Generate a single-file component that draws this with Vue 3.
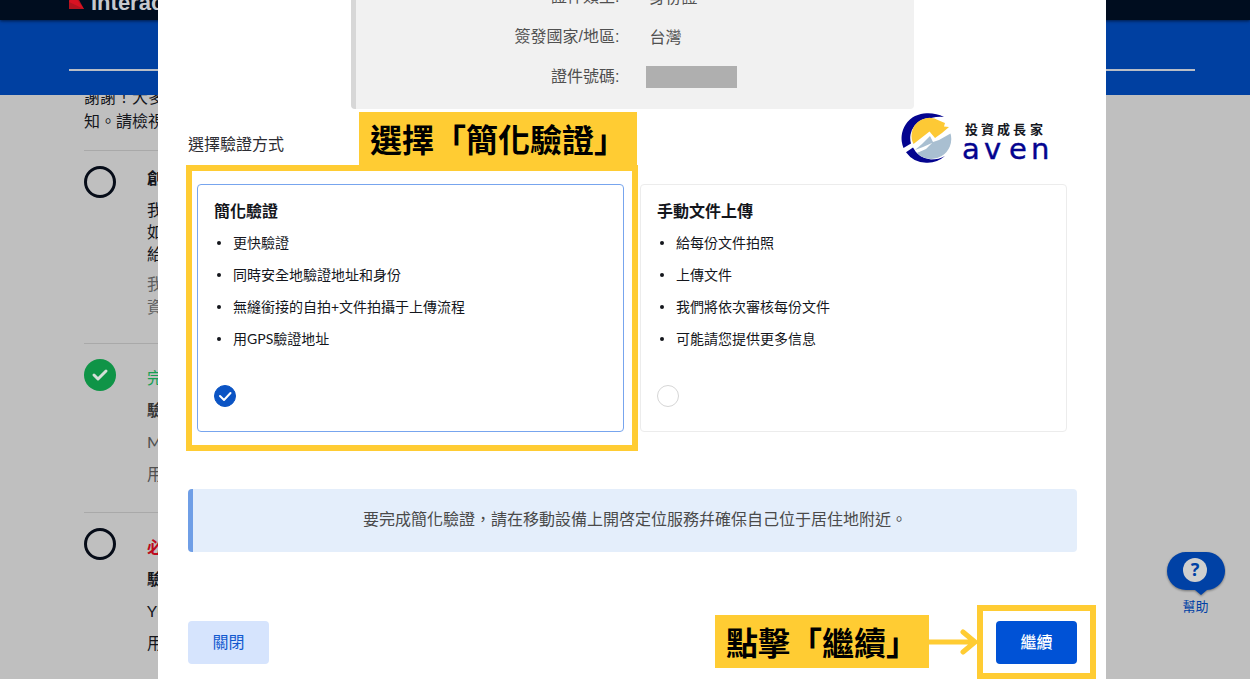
<script setup>
import { ref } from 'vue'

const summary = [
  { label: '證件類型:', value: '身份證' },
  { label: '簽發國家/地區:', value: '台灣' },
  { label: '證件號碼:', value: '' },
]

const methods = [
  {
    id: 'simple',
    title: '簡化驗證',
    points: ['更快驗證', '同時安全地驗證地址和身份', '無縫銜接的自拍+文件拍攝于上傳流程', '用GPS驗證地址'],
  },
  {
    id: 'manual',
    title: '手動文件上傳',
    points: ['給每份文件拍照', '上傳文件', '我們將依次審核每份文件', '可能請您提供更多信息'],
  },
]

const selected = ref('simple')
</script>

<template>
  <div class="page">
    <header class="topbar">
      <svg class="brand-mark" width="15" height="20" viewBox="0 0 15 20" aria-hidden="true">
        <path d="M0 0H4L15 20H0Z" fill="#b3131f" />
        <path d="M4 5L15 20L0 13Z" fill="#d81222" />
      </svg>
      <span class="brand-name">Interactive</span>
    </header>
    <div class="banner"><div class="banner-line"></div></div>

    <main class="tasks">
      <p class="intro">謝謝！大多<br />知。請檢視</p>
      <section class="task first">
        <span class="ring"></span>
        <div class="task-text">
          <h2>創</h2>
          <p class="body">我<br />如<br />給</p>
          <p class="hint">我<br />資</p>
        </div>
      </section>
      <section class="task">
        <svg class="done" width="32" height="32" viewBox="0 0 32 32" aria-hidden="true">
          <circle cx="16" cy="16" r="16" fill="#0f9447" />
          <path d="M10 16L14 20L22 12" fill="none" stroke="#d5dfd8" stroke-width="3" stroke-linecap="round" stroke-linejoin="round" />
        </svg>
        <div class="task-text muted">
          <p class="ok">完</p>
          <h2>驗</h2>
          <p>M</p>
          <p>用</p>
        </div>
      </section>
      <section class="task">
        <span class="ring"></span>
        <div class="task-text">
          <p class="required">必</p>
          <h2>驗</h2>
          <p>YU</p>
          <p>用</p>
        </div>
      </section>
    </main>

    <button class="help" type="button">
      <svg width="61" height="48" viewBox="0 0 61 48" aria-hidden="true">
        <path class="bubble" d="M21 2H40A19 19 0 0 1 42 40L36 45L30 40H21A19 19 0 0 1 21 2Z" fill="#0041a5" />
        <circle cx="30" cy="20" r="12" fill="#cfcfcf" />
        <text x="30" y="26" text-anchor="middle" class="question">?</text>
      </svg>
      <span>幫助</span>
    </button>

    <div class="overlay">
      <div class="modal" role="dialog" aria-label="選擇驗證方式">
        <dl class="summary">
          <div v-for="row in summary" :key="row.label" class="summary-row">
            <dt>{{ row.label }}</dt>
            <dd v-if="row.value">{{ row.value }}</dd>
            <dd v-else class="redacted"></dd>
          </div>
        </dl>

        <div class="method-head">
          <h3>選擇驗證方式</h3>
          <svg class="logo" width="149" height="50" viewBox="0 0 149 50" role="img" aria-label="投資成長家 aven">
            <g fill="#04048f">
              <path d="M43 4Q35 0 26 0.300A25 25 0 0 0 2.500 35L10 30.500A20 20 0 0 1 30 5Q38 3 43 4Z" />
              <path d="M5 39.300L12 34.500Q17 45 30 46.500Q38 46.500 44 43Q36 50 26 49.700A25 25 0 0 1 5 39.300Z" />
            </g>
            <path d="M12.500 31A18 18 0 0 1 38 7.500Q42 9 44 10L43 13.500L48 14L41 20L34 25L28.500 18.500Z" fill="#fdc935" />
            <path d="M14 37L21 31L29 23L32 29L38 27L49.500 20.500A20 20 0 0 1 16 40L25 36L31 30L22 34Z" fill="#a9bfd1" />
            <path d="M16 40L26 37L33 30L38 28L49 22A20 20 0 0 1 16 40Z" fill="#a9bfd1" />
            <text class="logo-zh" x="64 80 96 112 129" y="21">投資成長家</text>
            <text class="logo-en" x="61 83 108 130" y="46">aven</text>
          </svg>
        </div>

        <div class="methods">
          <label v-for="m in methods" :key="m.id" class="card" :class="{ active: selected === m.id }">
            <strong>{{ m.title }}</strong>
            <ul>
              <li v-for="p in m.points" :key="p">{{ p }}</li>
            </ul>
            <span class="radio">
              <input v-model="selected" type="radio" name="method" :value="m.id" />
              <svg v-if="selected === m.id" viewBox="0 0 22 22" aria-hidden="true">
                <path d="M6 11L10 15L16.500 8" fill="none" stroke="#fff" stroke-width="2" stroke-linecap="round" stroke-linejoin="round" />
              </svg>
            </span>
            <span v-if="m.id === 'simple'" class="frame card-frame">
              <span class="callout card-callout">選擇「簡化驗證」</span>
            </span>
          </label>
        </div>

        <p class="notice">要完成簡化驗證，請在移動設備上開啓定位服務幷確保自己位于居住地附近。</p>

        <footer class="actions">
          <button class="btn close" type="button">關閉</button>
          <div class="next">
            <button class="btn go" type="button">繼續</button>
            <span class="frame next-frame"></span>
            <div class="pointer">
              <span class="callout">點擊「繼續」</span>
              <svg width="48" height="28" viewBox="0 0 48 28" aria-hidden="true">
                <path d="M0 14H46M34 4L46 14L34 24" fill="none" stroke="#ffcc33" stroke-width="5" stroke-linecap="round" stroke-linejoin="round" />
              </svg>
            </div>
          </div>
        </footer>
      </div>
    </div>
  </div>
</template>

<style>
body {
  margin: 0;
  background: #bfbfbf;
}
</style>

<style scoped>
* {
  box-sizing: border-box;
}
.page {
  position: relative;
  height: 100vh;
  overflow: hidden;
  background: #bfbfbf;
  color: #14161c;
  font: 16px/24px Lato, "Noto Sans CJK TC", sans-serif;
}
h2, h3, p, ul, dl, dd {
  margin: 0;
  padding: 0;
}
h2 {
  font-size: 16px;
  line-height: inherit;
}
button {
  border: 0;
  font: inherit;
  cursor: pointer;
}

.topbar {
  position: relative;
  z-index: 2;
  display: flex;
  align-items: flex-end;
  gap: 7px;
  height: 20px;
  padding: 0 0 11px 69px;
  background: #000d1f;
  box-shadow: 0 1px 3px #001a44;
}
.brand-mark {
  flex: none;
}
.brand-name {
  margin-bottom: -6px;
  color: #c6c9ce;
  font: 700 22px/24px "Liberation Sans", sans-serif;
}
.banner {
  position: relative;
  z-index: 1;
  height: 75px;
  padding: 49px 55px 0 69px;
  background: #0040a1;
}
.banner-line {
  height: 2px;
  background: #b9bdc6;
}

.tasks {
  margin: -10px 150px 0 84px;
}
.intro {
  padding-bottom: 17px;
}
.task {
  display: flex;
  align-items: flex-start;
  gap: 30px;
  padding: 15px 0 22px;
  border-top: 1px solid #a9a9a9;
}
.ring {
  flex: none;
  width: 32px;
  height: 32px;
  border: 3px solid #060c18;
  border-radius: 50%;
}
.done {
  flex: none;
}
.task-text {
  padding: 3px 0 0 1px;
  line-height: 32px;
}
.first {
  padding: 15px 0 25px;
}
.first .task-text {
  margin-top: -4px;
  padding-top: 0;
}
.body {
  padding: 5px 0 7px;
  line-height: 22px;
}
.hint {
  color: #606060;
  line-height: 23px;
}
.muted {
  color: #505050;
}
.muted h2 {
  color: #343434;
}
.ok {
  color: #14a053;
}
.required {
  color: #bd0b1c;
  font-weight: 700;
}

.help {
  position: absolute;
  right: 24px;
  bottom: 65px;
  display: flex;
  flex-direction: column;
  align-items: center;
  padding: 0;
  background: none;
  color: #0041a5;
  font-size: 13px;
  line-height: 16px;
}
.bubble {
  filter: drop-shadow(0 1px 1px #0006);
}
.question {
  fill: #0041a5;
  font: 700 18px "Noto Sans", sans-serif;
}

.overlay {
  position: absolute;
  inset: 0;
  z-index: 3;
  display: flex;
  justify-content: center;
  padding: 0 144px 0 158px;
}
.modal {
  flex: 1;
  margin-top: -23px;
  padding: 0 29px;
  background: #fff;
}

.summary {
  width: 563px;
  margin: 0 auto;
  padding-bottom: 12px;
  border-left: 5px solid #d7d7d7;
  border-radius: 4px;
  background: #f1f1f1;
  color: #505050;
}
.summary-row {
  display: grid;
  grid-template-columns: 264px 1fr;
  gap: 26px;
  align-items: center;
  height: 40px;
}
.summary-row dt {
  font-family: "Liberation Sans", "Noto Sans CJK TC", sans-serif;
  text-align: right;
}
.summary-row dd {
  padding-left: 4px;
}
.summary-row .redacted {
  width: 91px;
  height: 22px;
  background: #afafaf;
}

.method-head {
  display: flex;
  justify-content: space-between;
  align-items: flex-start;
  height: 75px;
  padding: 4px 27px 0 1px;
}
.method-head h3 {
  padding-top: 19px;
  color: #2c2c32;
  font-size: 16px;
  font-weight: 400;
}
.logo-zh {
  fill: #15181f;
  font: 700 13px "Noto Sans CJK TC", sans-serif;
}
.logo-en {
  fill: #04048f;
  stroke: #04048f;
  stroke-width: 0.4px;
  font: 29px "DejaVu Sans", sans-serif;
}

.methods {
  display: grid;
  grid-template-columns: 1fr 1fr;
  gap: 16px;
  padding: 0 10px;
}
.card {
  position: relative;
  padding: 14px 16px 24px;
  border: 1px solid #ececec;
  border-radius: 4px;
}
.card.active {
  border-color: #77a5ee;
}
.card strong {
  display: block;
}
.card ul {
  margin: 4px 0 30px;
  list-style: none;
  font-size: 14px;
  line-height: 32px;
}
.card li {
  display: flex;
  align-items: center;
  gap: 12px;
  padding-left: 3px;
}
.card li::before {
  content: "";
  width: 4px;
  height: 4px;
  border-radius: 50%;
  background: #14161c;
}
.radio {
  position: relative;
  display: block;
  width: 22px;
  height: 22px;
}
.radio input {
  display: block;
  appearance: none;
  width: 22px;
  height: 22px;
  margin: 0;
  border: 1px solid #d6d6d6;
  border-radius: 50%;
}
.radio input:checked {
  border-color: #0b54c4;
  background: #0b54c4;
}
.radio svg {
  position: absolute;
  inset: 0;
}

.frame {
  position: absolute;
  border: 6px solid #ffcc33;
  pointer-events: none;
}
.card-frame {
  inset: -20px -15px -20px -12px;
}
.callout {
  display: block;
  padding: 2px 11px 0;
  background: #ffcc33;
  color: #000;
  font-size: 32px;
  font-weight: 700;
  line-height: 51px;
  white-space: nowrap;
}
.card-callout {
  position: absolute;
  right: -5px;
  bottom: calc(100% + 6px);
}

.notice {
  margin: 57px 0 69px 1px;
  padding: 18px 16px 21px;
  border-left: 5px solid #6f9ee6;
  border-radius: 4px;
  background: #e4eefb;
  color: #4a4a4a;
  text-align: center;
}

.actions {
  display: flex;
  justify-content: space-between;
  padding-left: 1px;
}
.btn {
  display: block;
  min-width: 81px;
  padding: 9px 24px 10px;
  border-radius: 4px;
}
.close {
  background: #d6e4fd;
  color: #1159cf;
}
.go {
  background: #0052d6;
  color: #fff;
  font-weight: 500;
}
.next {
  position: relative;
}
.next-frame {
  inset: -16px -19px -15px;
}
.pointer {
  position: absolute;
  top: -6px;
  right: calc(100% + 19px);
  display: flex;
  align-items: center;
}
</style>
